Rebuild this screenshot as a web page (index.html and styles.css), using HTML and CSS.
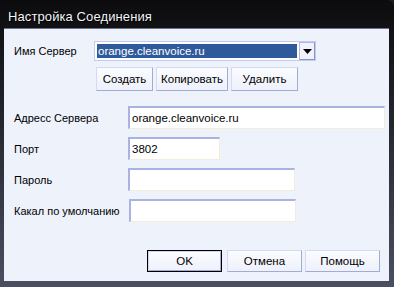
FILE: index.html
```html
<!DOCTYPE html>
<html lang="ru">
<head>
  <meta charset="UTF-8" />
  <title>Настройка Соединения</title>
  <link rel="stylesheet" href="styles.css">
</head>
<body>
  <div class="window">
    <div class="titlebar">Настройка Соединения</div>
    <div class="client">
      <div class="server-row">
        <label class="server-label">Имя Сервер</label>
        <div class="combo">
          <span class="combo-value">orange.cleanvoice.ru</span>
          <span class="combo-btn">
            <svg width="9" height="5" viewBox="0 0 9 5"><polygon points="0,0 9,0 4.5,5" fill="#000"/></svg>
          </span>
        </div>
      </div>
      <div class="server-actions">
        <button class="btn btn-create">Создать</button>
        <button class="btn btn-copy">Копировать</button>
        <button class="btn btn-delete">Удалить</button>
      </div>
      <div class="fields">
        <div class="field">
          <label>Адресс Сервера</label>
          <input class="input input-address" type="text" value="orange.cleanvoice.ru">
        </div>
        <div class="field">
          <label>Порт</label>
          <input class="input input-port" type="text" value="3802">
        </div>
        <div class="field">
          <label>Пароль</label>
          <input class="input input-pass" type="text" value="">
        </div>
        <div class="field field-channel">
          <label>Какал по умолчанию</label>
          <input class="input input-channel" type="text" value="">
        </div>
      </div>
      <div class="footer">
        <button class="btn btn-ok">OK</button>
        <button class="btn btn-cancel">Отмена</button>
        <button class="btn btn-help">Помощь</button>
      </div>
    </div>
  </div>
</body>
</html>
```

FILE: styles.css
```css
:root {
  --client: #eef2fb;
  --text: #000;
  --sel: #2e5a9c;
}
html, body {
  margin: 0;
  background: #1c1d22;
}
body {
  font-family: 'Liberation Sans', Arial, sans-serif;
  font-size: 11px;
  color: var(--text);
}
.window {
  width: 394px;
  height: 287px;
  box-sizing: border-box;
  background: linear-gradient(180deg, #0c0c0e 0%, #23252d 40%, #4a4f62 100%);
  border-radius: 0 7px 0 0;
  padding: 0 5px 6px 4px;
  display: flex;
  flex-direction: column;
  overflow: hidden;
}
.titlebar {
  height: 28px;
  flex: none;
  box-sizing: border-box;
  padding: 9px 0 0 4px;
  color: #f4f4f8;
  font-size: 13px;
  letter-spacing: 0.1px;
  text-shadow: 1px 1px 0 #000, -1px 0 0 #000, 0 -1px 0 #111;
  line-height: 16px;
}
.client {
  flex: 1;
  background: var(--client);
  border-top: 1px solid #6c7286;
  padding: 12px 0 0 10px;
  display: flex;
  flex-direction: column;
}
label {
  white-space: nowrap;
}
.server-row {
  display: flex;
  align-items: center;
  height: 20px;
}
.server-label {
  width: 80px;
}
.combo {
  width: 222px;
  height: 20px;
  box-sizing: border-box;
  border: 1px solid #c3cbed;
  background: #fff;
  padding: 2px;
  display: flex;
  gap: 2px;
}
.combo-value {
  flex: 1;
  background: var(--sel);
  color: #fff;
  font-size: 11.5px;
  line-height: 14px;
  padding-left: 1px;
}
.combo-btn {
  width: 16px;
  margin: -2px -2px -2px 0;
  box-sizing: border-box;
  border: 1px solid #b0b8e0;
  border-right-color: #8c94c4;
  border-bottom-color: #8c94c4;
  background: #f0f3fc;
  display: flex;
  align-items: center;
  justify-content: center;
}
.btn {
  font-family: inherit;
  font-size: 11.5px;
  color: #000;
  background: linear-gradient(180deg, #fbfcff 0%, #eef1fb 100%);
  border: 1px solid #d4daf2;
  border-right-color: #a2aad6;
  border-bottom-color: #a2aad6;
  padding: 0;
  height: 24px;
  box-sizing: border-box;
}
.server-actions {
  display: flex;
  gap: 3px;
  margin: 6px 0 0 82px;
}
.btn-create { width: 57px; }
.btn-copy { width: 72px; }
.btn-delete { width: 67px; }
.fields {
  margin-top: 15px;
  display: flex;
  flex-direction: column;
  gap: 8px;
}
.field {
  display: flex;
  align-items: center;
  height: 23px;
}
.field label {
  width: 114px;
}
.input {
  height: 23px;
  box-sizing: border-box;
  border: 2px solid #aab2e2;
  border-right: 1px solid #f2ecd8;
  border-bottom: 1px solid #f2ecd8;
  background: #fff;
  font-family: inherit;
  font-size: 11.5px;
  padding: 0 0 0 2px;
  color: #000;
  outline: none;
}
.input-address { width: 257px; }
.input-port { width: 92px; }
.input-pass { width: 167px; }
.input-channel { width: 167px; }
.field-channel label { width: 115px; }
.footer {
  display: flex;
  margin: 28px 0 0 133px;
  gap: 5px;
}
.footer .btn {
  height: 22px;
  width: 75px;
}
.btn-ok {
  border: 1px solid #000 !important;
  box-shadow: inset 1px 1px 0 #d0d6f0, inset -1px -1px 0 #a2aad6;
}
.btn-help { margin-left: -2px; }
```
